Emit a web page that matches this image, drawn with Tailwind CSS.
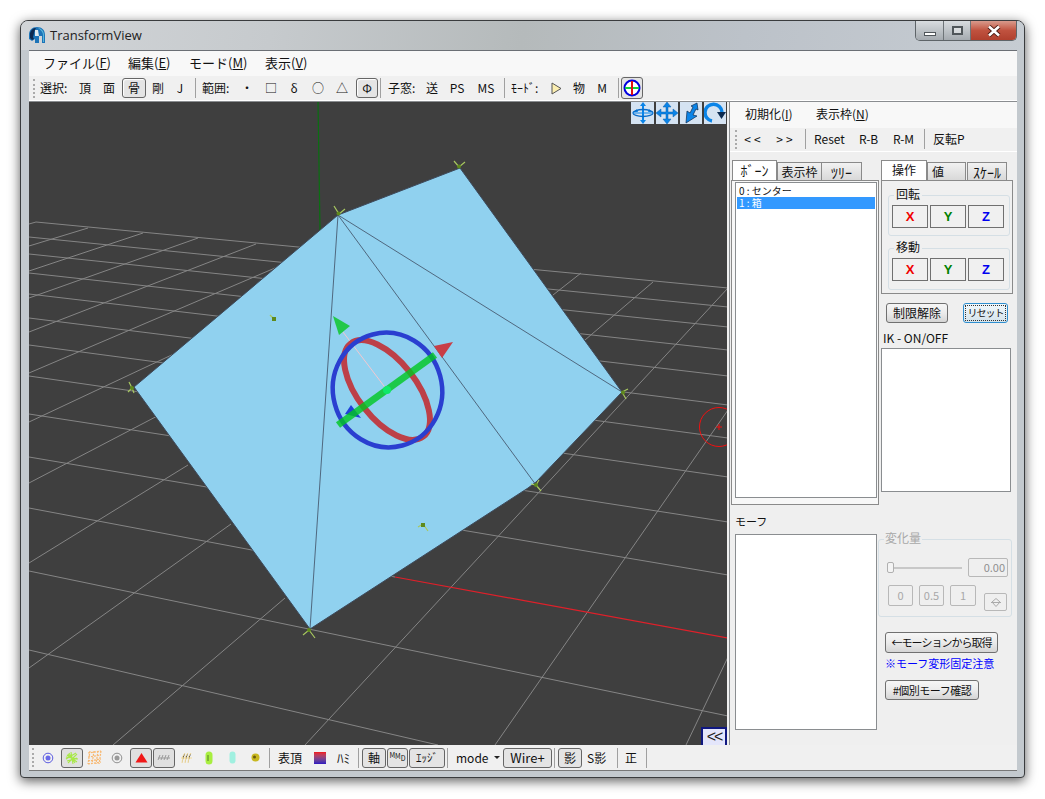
<!DOCTYPE html>
<html lang="ja">
<head>
<meta charset="UTF-8">
<title>TransformView</title>
<script src="https://cdn.jsdelivr.net/npm/@tailwindcss/browser@4"></script>
</head>
<body class="bg-white w-[1045px] h-[799px] overflow-hidden pt-[20px] pl-[20px] font-['Noto_Sans_CJK_JP','Liberation_Sans',sans-serif] text-[12px] leading-none text-[#111]">

<!-- window -->
<div class="w-[1005px] h-[758px] flex flex-col rounded-t-[8px] rounded-b-[4px] border border-[#3a3c3e] bg-[#c3c9ce] shadow-[0_3px_12px_rgba(0,0,0,0.65)]">

  <!-- title bar -->
  <div class="h-[29px] shrink-0 flex items-start rounded-t-[7px] bg-[linear-gradient(100deg,#d2d5d8_0%,#c6cacd_25%,#b5babb_50%,#bcc2c9_72%,#c6ccd2_100%)]">
    <svg class="ml-[8px] mt-[6px]" width="16" height="16" viewBox="0 0 16 16">
      <path d="M0 8C0 3 3 0 8 0s8 3 8 8v8h-3V9h-3v7H6v-4l-3 2-3-2z" fill="#1d74b8"/>
      <path d="M1 6c1-3 3-5 6-5-2 3-2 6-3 9l1 2-2 1-2-2z" fill="#0e2a50"/>
      <path d="M9 1c3 0 6 3 6 7v7h-1V8c0-3-2-5-5-7z" fill="#58b8dc"/>
      <path d="M6 3h3l1 6H6z" fill="#dfe8ee"/>
    </svg>
    <span class="ml-[5px] mt-[6px] font-['Open_Sans'] text-[13px] leading-[16px] text-[#222]">TransformView</span>
    <!-- caption buttons -->
    <div class="ml-auto mr-[7px] flex h-[20px] border border-t-0 border-[#5e6468] rounded-b-[5px] overflow-hidden">
      <div class="w-[28px] flex items-end justify-center pb-[4px] bg-linear-to-b from-[#d8dcdf] to-[#a5abb0] border-r border-[#6e7478]">
        <div class="w-[12px] h-[4px] bg-white border border-[#50565a]"></div>
      </div>
      <div class="w-[27px] flex items-center justify-center bg-linear-to-b from-[#d8dcdf] to-[#a5abb0] border-r border-[#6e7478]">
        <div class="w-[11px] h-[9px] border-2 border-[#50565a] bg-white/40"></div>
      </div>
      <div class="w-[45px] flex items-center justify-center bg-linear-to-b from-[#d89a8c] via-[#c0523f] to-[#b0402e]">
        <svg width="14" height="12" viewBox="0 0 14 12"><path d="M2 1.500l10 9M12 1.500l-10 9" stroke="#4a1c14" stroke-width="4.400"/><path d="M2 1.500l10 9M12 1.500l-10 9" stroke="#fff" stroke-width="2.600"/></svg>
      </div>
    </div>
  </div>

  <!-- client area -->
  <div class="mx-[8px] w-[988px] h-[721px] shrink-0 flex flex-col border-t border-[#6b6f75] bg-[#f0f0f0]">

    <!-- menu -->
    <div class="h-[25px] shrink-0 flex items-center pb-[2px] text-[13px] bg-[#f8f8f8]">
      <span class="ml-[14px] w-[85px]">ファイル(<u>F</u>)</span>
      <span class="w-[61px]">編集(<u>E</u>)</span>
      <span class="w-[76px]">モード(<u>M</u>)</span>
      <span>表示(<u>V</u>)</span>
    </div>

    <!-- main toolbar -->
    <div class="h-[25px] shrink-0 flex items-center bg-[#f0f0f0] border-b border-white text-[12px]">
      <div class="ml-[4px] w-[3px] h-[19px] border-l-2 border-dotted border-[#aaa]"></div>
      <span class="ml-[4px] w-[33px]">選択:</span>
      <span class="w-[24px] text-center">頂</span>
      <span class="w-[24px] text-center">面</span>
      <span class="ml-[1px] w-[24px] h-[20px] flex items-center justify-center rounded-[3px] border border-[#666] bg-[#e4e4e4] shadow-[inset_1px_1px_1px_#fff]">骨</span>
      <span class="w-[24px] text-center">剛</span>
      <span class="w-[20px] text-center">J</span>
      <div class="ml-[5px] w-[1px] h-[20px] bg-[#a0a0a0]"></div>
      <span class="ml-[6px] w-[30px]">範囲:</span>
      <span class="ml-[3px] w-[24px] text-center">・</span>
      <span class="w-[24px] text-center">□</span>
      <span class="w-[22px] text-center">δ</span>
      <span class="ml-[1px] w-[24px] text-center">○</span>
      <span class="w-[24px] text-center">△</span>
      <span class="ml-[2px] w-[22px] h-[20px] flex items-center justify-center rounded-[3px] border border-[#666] bg-[#e4e4e4] shadow-[inset_1px_1px_1px_#fff]">Φ</span>
      <div class="ml-[2px] w-[1px] h-[20px] bg-[#a0a0a0]"></div>
      <span class="ml-[7px] w-[30px]">子窓:</span>
      <span class="ml-[2px] w-[24px] text-center">送</span>
      <span class="ml-[1px] w-[24px] text-center">PS</span>
      <span class="ml-[1px] w-[32px] text-center">MS</span>
      <div class="ml-[2px] w-[1px] h-[20px] bg-[#a0a0a0]"></div>
      <span class="ml-[6px] w-[29px] whitespace-nowrap">ﾓｰﾄﾞ:</span>
      <span class="ml-[4px] w-[24px] flex justify-center">
        <svg width="11" height="13" viewBox="0 0 11 13"><path d="M1 1l9 5.500-9 5.500z" fill="#fbeeb0" stroke="#555"/></svg>
      </span>
      <span class="w-[22px] text-center">物</span>
      <span class="w-[24px] text-center">M</span>
      <div class="ml-[4px] w-[1px] h-[20px] bg-[#a0a0a0]"></div>
      <span class="ml-[2px] w-[22px] h-[22px] flex items-center justify-center rounded-[3px] border border-[#666] bg-[#e4e4e4]">
        <svg width="18" height="18" viewBox="0 0 18 18"><circle cx="9" cy="9" r="7.500" fill="#fff" stroke="#0000e0" stroke-width="2"/><path d="M2 9h14" stroke="#10d040" stroke-width="2"/><path d="M9 2v14" stroke="#e01010" stroke-width="2"/></svg>
      </span>
    </div>

    <!-- workspace -->
    <div class="h-[644px] shrink-0 flex border-t border-[#8a8d90]">

      <!-- 3D view -->
      <div class="relative w-[698px] h-[643px] shrink-0 bg-[#3f3f3f] overflow-hidden">
        <svg class="block" width="698" height="643" viewBox="29 102 698 643">
          <g stroke="#858585" stroke-width="1" fill="none">
            <path d="M29 224L36 222L728 288"/>
            <path d="M29 237L728 307"/>
            <path d="M29 254L728 327"/>
            <path d="M29 273L728 350"/>
            <path d="M29 294L728 376"/>
            <path d="M29 318L728 405"/>
            <path d="M29 345L728 438"/>
            <path d="M29 376L728 477"/>
            <path d="M29 414L728 522"/>
            <path d="M29 457L728 575"/>
            <path d="M29 508L395 577"/>
            <path d="M29 571L728 716"/>
            <path d="M29 650L438 745"/>
            <path d="M29 246L88 228"/>
            <path d="M29 271L143 233"/>
            <path d="M29 298L198 238"/>
            <path d="M29 332L256 244"/>
            <path d="M29 373L275 268"/>
            <path d="M29 422L178 352"/>
            <path d="M29 483L165 412"/>
            <path d="M29 563L188 465"/>
            <path d="M29 668L231 524"/>
            <path d="M113 745L285 598"/>
            <path d="M305 745L728 288"/>
            <path d="M495 745L728 410"/>
            <path d="M686 745L728 657"/>
            <path d="M553 295L581 273"/>
            <path d="M585 340L653 282"/>
          </g>
          <path d="M395 577L728 638" stroke="#e0202a" stroke-width="1.200"/>
          <path d="M318 102L320 230" stroke="#0b6e12" stroke-width="1.200"/>
          <path d="M134 387L338 215L460 168L622 392L536 482L528 488L310 629Z" fill="#90d1ef" stroke="#3d4a5c" stroke-width="1"/>
          <g stroke="#3f4c62" stroke-width="0.800" fill="none">
            <path d="M338 215L622 392"/>
            <path d="M338 215L536 485"/>
            <path d="M338 215L310 629"/>
          </g>
          <!-- vertices -->
          <g stroke="#a8c860" stroke-width="1.200" fill="none">
            <path d="M334 206L339 214L345 209"/>
            <path d="M129 382L132 388L134 393M132 388L128 392"/>
            <path d="M454 161L459 167L465 162"/>
            <path d="M628 389L622 392L626 399"/>
            <path d="M539 480L536 485L531 484M536 485L541 491"/>
            <path d="M303 635L309 630L315 638"/>
            <path d="M270 315L274 319"/>
            <path d="M418 527L423 524L428 531"/>
          </g>
          <g fill="#5f8a1c">
            <circle cx="338.500" cy="213.500" r="2"/><circle cx="132" cy="388" r="2"/><circle cx="459" cy="166.500" r="2"/><circle cx="623" cy="392.500" r="2"/><circle cx="536" cy="485" r="2"/><circle cx="309" cy="630" r="2"/>
            <rect x="272" y="317" width="4" height="4"/><rect x="421" y="523" width="4" height="4"/>
          </g>
          <!-- gizmo -->
          <path d="M343 332L387 390" stroke="#f2c8d0" stroke-width="1"/>
          <ellipse cx="387" cy="390" rx="59" ry="29" transform="rotate(52 387 390)" fill="none" stroke="#bd4048" stroke-width="6"/>
          <path d="M351 405L345 414L361 418Z" fill="#2040d8"/>
          <ellipse cx="387.500" cy="390" rx="54.500" ry="57.500" transform="rotate(-15 387.500 390)" fill="none" stroke="#2a3fd0" stroke-width="4.500"/>
          <path d="M338 425L435 355" stroke="#00c820" stroke-width="7" opacity="0.800"/>
          <circle cx="387" cy="390" r="4" fill="#10e868"/>
          <path d="M453 342L434 346L442 358Z" fill="#c83e46"/>
          <path d="M333 316L339 335L350 326Z" fill="#22c84a"/>
          <circle cx="719" cy="427" r="19.500" fill="none" stroke="#f01010" stroke-width="1"/>
          <path d="M716 427h6M719 424v6" stroke="#f01010"/>
        </svg>

        <!-- view buttons -->
        <div class="absolute top-0 left-[602px] flex gap-[2px]">
          <div class="w-[23px] h-[22px] bg-[#d5e3f2] flex items-center justify-center">
            <svg width="22" height="22" viewBox="0 0 22 22"><g fill="#0a84e8"><path d="M11 0l3 4h-2v14h2l-3 4-3-4h2V4H8z"/><path d="M5 7l1 3H2zM17 7l3 3h-4z"/></g><ellipse cx="11" cy="11" rx="10" ry="3.500" fill="none" stroke="#0a6cc8" stroke-width="1.300"/><path d="M1 11h20" stroke="#0a84e8" stroke-width="1"/></svg>
          </div>
          <div class="w-[22px] h-[22px] bg-[#d5e3f2] flex items-center justify-center">
            <svg width="22" height="22" viewBox="0 0 22 22"><path d="M11 0l4 5h-3v5h5V7l5 4-5 4v-3h-5v5h3l-4 5-4-5h3v-5H5v3l-5-4 5-4v3h5V5H7z" fill="#0a84e8" stroke="#0a5ca8" stroke-width="0.500"/></svg>
          </div>
          <div class="w-[22px] h-[22px] bg-[#d5e3f2] flex items-center justify-center">
            <svg width="22" height="22" viewBox="0 0 22 22"><path d="M17 1l1 7-2-1-3 6 4 1-11 7 1-12 3 2 3-6-2-1z" fill="#0a84e8" stroke="#0a2a50" stroke-width="0.700"/></svg>
          </div>
          <div class="w-[22px] h-[22px] bg-[#d5e3f2] flex items-center justify-center">
            <svg width="22" height="22" viewBox="0 0 22 22"><path d="M8 19A8.500 8.500 0 1 1 18 10" fill="none" stroke="#0a84e8" stroke-width="3.500"/><path d="M13 10h9l-4.500 7z" fill="#0a2a50"/></svg>
          </div>
        </div>

        <!-- panel toggle -->
        <div class="absolute right-0 bottom-0 w-[26px] h-[18px] flex items-center justify-center bg-[#e4e6fb] border-2 border-b-0 border-[#101880] font-['Liberation_Sans'] font-light text-[16px] leading-[14px] tracking-[-2px] text-[#222]">&lt;&lt;</div>
      </div>

      <div class="w-[2px] shrink-0 bg-[#f0f0f0]"></div>

      <!-- right panel -->
      <div class="w-[288px] shrink-0 flex flex-col border-l border-[#8a8d90] bg-[#efefef]">
        <div class="h-[26px] shrink-0 flex items-center pb-[2px] bg-[#f8f8f8] text-[12px]">
          <span class="ml-[15px] w-[71px]">初期化(<u>I</u>)</span>
          <span>表示枠(<u>N</u>)</span>
        </div>
        <div class="h-[24px] shrink-0 flex items-center pb-[1px] bg-[#f0f0f0] border-b border-white">
          <div class="ml-[5px] w-[3px] h-[19px] border-l-2 border-dotted border-[#aaa]"></div>
          <span class="w-[32px] text-center tracking-[3px]">&lt;&lt;</span>
          <span class="w-[32px] text-center tracking-[3px]">&gt;&gt;</span>
          <div class="ml-[3px] w-[1px] h-[20px] bg-[#a0a0a0]"></div>
          <span class="ml-[8px] w-[45px]">Reset</span>
          <span class="w-[34px]">R-B</span>
          <span class="w-[31px]">R-M</span>
          <div class="w-[1px] h-[20px] bg-[#a0a0a0]"></div>
          <span class="ml-[8px]">反転P</span>
        </div>

        <div class="flex pl-[1px] pt-[8px]">
          <!-- left column -->
          <div class="w-[150px] shrink-0">
            <div class="flex items-end h-[20px] pl-[1px]">
              <span class="w-[45px] h-[20px] pb-[2px] flex items-center justify-center bg-white border border-b-0 border-[#8a8a8a] text-[14px]">ﾎﾞｰﾝ</span>
              <span class="w-[45px] h-[18px] flex items-center justify-center bg-linear-to-b from-[#f2f2f2] to-[#d8d8d8] border border-b-0 border-[#8a8a8a] text-[12px]">表示枠</span>
              <span class="w-[40px] h-[18px] flex items-center justify-center bg-linear-to-b from-[#f2f2f2] to-[#d8d8d8] border border-b-0 border-l-0 border-[#8a8a8a] text-[14px]">ﾂﾘｰ</span>
            </div>
            <div class="w-[148px] h-[325px] bg-[#f7f7f7] border border-[#8a8a8a] pl-[3px] pt-[1px]">
              <div class="w-[142px] h-[316px] bg-white border border-[#8a8d90] p-[1px] text-[10px]">
                <div class="h-[13px] leading-[13px] pl-[2px]">0 : センター</div>
                <div class="h-[12px] leading-[12px] pl-[2px] bg-[#3399ff] text-white">1 : 箱</div>
              </div>
            </div>
            <div class="ml-[4px] mt-[11px] h-[14px] text-[11px] leading-[11px]">モーフ</div>
            <div class="ml-[4px] mt-[4px] w-[142px] h-[196px] bg-white border border-[#8a8d90]"></div>
          </div>

          <!-- right column -->
          <div class="w-[133px] shrink-0">
            <div class="flex items-end h-[20px]">
              <span class="w-[46px] h-[20px] pb-[1px] flex items-center justify-center bg-white border border-b-0 border-[#8a8a8a] text-[12px]">操作</span>
              <span class="w-[39px] h-[18px] pl-[4px] flex items-center bg-linear-to-b from-[#f2f2f2] to-[#d8d8d8] border border-b-0 border-[#8a8a8a]">値</span>
              <span class="ml-[1px] w-[40px] h-[18px] flex items-center justify-center bg-linear-to-b from-[#f2f2f2] to-[#d8d8d8] border border-b-0 border-[#8a8a8a] text-[14px]">ｽｹｰﾙ</span>
            </div>
            <div class="w-[132px] h-[114px] bg-[#f0f0f0] border border-[#8a8a8a] pl-[6px] pt-[7px]">
              <fieldset class="w-[122px] h-[48px] border border-[#d5dfe5] rounded-[3px] pl-[3px]">
                <legend class="ml-[2px] px-[2px] h-[14px] leading-[11px]">回転</legend>
                <div class="mt-[3px] flex gap-[2px] font-['Liberation_Sans'] font-bold text-[13px]">
                  <span class="w-[36px] h-[23px] flex items-center justify-center border border-[#707070] text-[#f00000]">X</span>
                  <span class="w-[36px] h-[23px] flex items-center justify-center border border-[#707070] text-[#008000]">Y</span>
                  <span class="w-[36px] h-[23px] flex items-center justify-center border border-[#707070] text-[#0000f0]">Z</span>
                </div>
              </fieldset>
              <fieldset class="mt-[5px] w-[122px] h-[49px] border border-[#d5dfe5] rounded-[3px] pl-[3px]">
                <legend class="ml-[2px] px-[2px] h-[14px] leading-[11px]">移動</legend>
                <div class="mt-[3px] flex gap-[2px] font-['Liberation_Sans'] font-bold text-[13px]">
                  <span class="w-[36px] h-[23px] flex items-center justify-center border border-[#707070] text-[#f00000]">X</span>
                  <span class="w-[36px] h-[23px] flex items-center justify-center border border-[#707070] text-[#008000]">Y</span>
                  <span class="w-[36px] h-[23px] flex items-center justify-center border border-[#707070] text-[#0000f0]">Z</span>
                </div>
              </fieldset>
            </div>
            <div class="mt-[9px] flex">
              <span class="ml-[5px] w-[62px] h-[20px] flex items-center justify-center rounded-[3px] border border-[#707070] bg-linear-to-b from-[#f6f6f6] via-[#ebebeb] to-[#d5d5d5]">制限解除</span>
              <span class="ml-[15px] w-[45px] h-[20px] p-[1px] rounded-[3px] border border-[#2f8fd0] bg-linear-to-b from-[#f0f8fc] to-[#d5e4ec]">
                <span class="w-full h-full flex items-center justify-center border border-dotted border-[#333] text-[10px] tracking-[-1px] whitespace-nowrap">リセット</span>
              </span>
            </div>
            <div class="mt-[9px] ml-[2px] h-[14px] leading-[11px]">IK - ON/OFF</div>
            <div class="mt-[2px] w-[130px] h-[144px] bg-white border border-[#8a8d90]"></div>

            <fieldset class="mt-[40px] -ml-[3px] w-[134px] h-[85px] border border-[#d5dfe5] rounded-[3px] text-[#a8a8a8]">
              <legend class="ml-[5px] px-[1px] h-[14px] leading-[11px]">変化量</legend>
              <div class="mt-[12px] flex items-center h-[19px]">
                <div class="relative ml-[8px] w-[75px] h-[2px] bg-[#c8c8c8]">
                  <div class="absolute left-0 -top-[5px] w-[7px] h-[11px] rounded-[2px] border border-[#b0b0b0] bg-[#f4f4f4]"></div>
                </div>
                <div class="ml-[6px] w-[40px] h-[19px] pr-[2px] flex items-center justify-end border border-[#b8b8b8] rounded-[2px] text-[11px] text-[#909090]">0.00</div>
              </div>
              <div class="mt-[8px] flex items-start pl-[9px] text-[11px]">
                <span class="w-[25px] h-[21px] flex items-center justify-center border border-[#b8b8b8] rounded-[2px]">0</span>
                <span class="ml-[6px] w-[25px] h-[21px] flex items-center justify-center border border-[#b8b8b8] rounded-[2px]">0.5</span>
                <span class="ml-[6px] w-[26px] h-[21px] flex items-center justify-center border border-[#b8b8b8] rounded-[2px]">1</span>
                <span class="ml-[8px] mt-[8px] w-[23px] h-[18px] flex items-center justify-center border border-[#b8b8b8] rounded-[2px]">
                  <svg width="10" height="9" viewBox="0 0 10 9"><path d="M5 .5L9 4 5 8.500 1 4z" fill="none" stroke="#aaa"/><path d="M0 4.500h10" stroke="#aaa"/></svg>
                </span>
              </div>
            </fieldset>
            <div class="mt-[15px] ml-[4px] w-[113px] h-[21px] flex items-center justify-center rounded-[3px] border border-[#707070] bg-linear-to-b from-[#f6f6f6] via-[#ebebeb] to-[#d5d5d5] text-[11px] tracking-[-1px] whitespace-nowrap">←モーションから取得</div>
            <div class="mt-[3px] ml-[4px] h-[14px] text-[11px] leading-[14px] text-[#0000ff] whitespace-nowrap">※モーフ変形固定注意</div>
            <div class="mt-[10px] ml-[4px] w-[94px] h-[20px] flex items-center justify-center rounded-[3px] border border-[#707070] bg-linear-to-b from-[#f6f6f6] via-[#ebebeb] to-[#d5d5d5] text-[11px] tracking-[-0.5px] whitespace-nowrap">#個別モーフ確認</div>
          </div>
        </div>
      </div>
    </div>

    <!-- bottom toolbar -->
    <div class="h-[26px] shrink-0 flex items-center bg-[#f0f0f0] border-b border-[#777]">
      <div class="ml-[3px] w-[3px] h-[19px] border-l-2 border-dotted border-[#aaa]"></div>
      <span class="ml-[2px] w-[22px] flex justify-center"><svg width="12" height="12" viewBox="0 0 12 12"><circle cx="6" cy="6" r="4.800" fill="none" stroke="#5a5ae0"/><circle cx="6" cy="6" r="2.500" fill="#6a6ae8"/></svg></span>
      <span class="ml-[2px] w-[22px] h-[20px] flex items-center justify-center rounded-[3px] border border-[#666] bg-[#e0e0e0]"><svg width="14" height="14" viewBox="0 0 14 14"><path d="M2 4l10 7M1 8l10-6M3 12l9-9M6 1l2 12M1 6l12 2M4 2l6 10M2 10l10-3M3 3l7 9" stroke="#a8e848" stroke-width="1.100"/></svg></span>
      <span class="w-[22px] flex justify-center"><svg width="15" height="15" viewBox="0 0 15 15"><path d="M1 3l13-2M1 7l13-2M1 11l13-2M1 14l13-2M3 1l-2 13M7 1l-2 13M11 1l-2 13M14 1l-2 13" stroke="#f8b870" stroke-width="1.200" stroke-dasharray="2 1"/></svg></span>
      <span class="ml-[1px] w-[22px] flex justify-center"><svg width="12" height="12" viewBox="0 0 12 12"><circle cx="6" cy="6" r="4.800" fill="none" stroke="#909090"/><circle cx="6" cy="6" r="2.500" fill="#9a9a9a"/></svg></span>
      <span class="ml-[2px] w-[22px] h-[20px] flex items-center justify-center rounded-[3px] border border-[#666] bg-[#e0e0e0]"><svg width="13" height="11" viewBox="0 0 13 11"><path d="M6.500 1L12.500 10.500H.5z" fill="#f01818"/></svg></span>
      <span class="ml-[1px] w-[22px] h-[20px] flex items-center justify-center rounded-[3px] border border-[#666] bg-[#e0e0e0]"><svg width="14" height="7" viewBox="0 0 14 7"><path d="M1 6l2-5M4 6l2-5M7 6l2-5M10 6l2-5M1 4h12" stroke="#9a9a9a" stroke-width="1"/></svg></span>
      <span class="w-[22px] flex justify-center"><svg width="13" height="12" viewBox="0 0 13 12"><path d="M2 11l1-7 2-3M5 11l1-7 2-3M8 11l1-7 2-3M1 6h11" stroke="#f5dc98" stroke-width="1"/></svg></span>
      <span class="ml-[1px] w-[22px] flex justify-center"><svg width="8" height="14" viewBox="0 0 8 14"><rect x="0.500" y="0.500" width="7" height="13" rx="3.500" fill="#a8ee40"/><path d="M3 4v6" stroke="#70a030" stroke-width="1.500"/></svg></span>
      <span class="ml-[1px] w-[22px] flex justify-center"><svg width="7" height="13" viewBox="0 0 7 13"><rect x="0.500" y="0.500" width="6" height="12" rx="3" fill="#a0f0e0"/></svg></span>
      <span class="ml-[1px] w-[22px] flex justify-center"><svg width="9" height="9" viewBox="0 0 9 9"><circle cx="4.500" cy="4.500" r="4" fill="#c8b820"/><circle cx="3.500" cy="4" r="1.500" fill="#6a5a10"/></svg></span>
      <div class="ml-[3px] w-[1px] h-[20px] bg-[#a0a0a0]"></div>
      <span class="ml-[8px] w-[24px] whitespace-nowrap">表頂</span>
      <div class="ml-[12px] w-[12px] h-[12px] bg-linear-to-b from-[#f01010] to-[#3010c0]"></div>
      <span class="ml-[11px] w-[13px] text-[13px] whitespace-nowrap">ﾊﾐ</span>
      <div class="ml-[8px] w-[1px] h-[20px] bg-[#a0a0a0]"></div>
      <span class="ml-[3px] w-[24px] h-[20px] flex items-center justify-center rounded-[3px] border border-[#666] bg-[#e4e4e4]">軸</span>
      <span class="ml-[1px] w-[21px] h-[20px] flex items-center justify-center rounded-[3px] border border-[#666] bg-[#e4e4e4] text-[7px] whitespace-nowrap"><span class="-mt-[5px]">M</span><span class="-mt-[3px]">M</span><span class="mt-[2px]">D</span></span>
      <span class="ml-[1px] w-[36px] h-[20px] flex items-center justify-center rounded-[3px] border border-[#666] bg-[#e4e4e4] text-[11px] whitespace-nowrap">ｴｯｼﾞ</span>
      <div class="ml-[2px] w-[1px] h-[20px] bg-[#a0a0a0]"></div>
      <span class="ml-[8px] w-[31px]">mode</span>
      <div class="ml-[7px] w-0 h-0 border-x-[3px] border-t-[3px] border-x-transparent border-t-[#222]"></div>
      <span class="ml-[3px] w-[49px] h-[20px] flex items-center justify-center rounded-[3px] border border-[#666] bg-[#e4e4e4] text-[13px]">Wire+</span>
      <div class="ml-[2px] w-[1px] h-[20px] bg-[#a0a0a0]"></div>
      <span class="ml-[3px] w-[24px] h-[20px] flex items-center justify-center rounded-[3px] border border-[#666] bg-[#e4e4e4]">影</span>
      <span class="ml-[5px] w-[20px] whitespace-nowrap">S影</span>
      <div class="ml-[10px] w-[1px] h-[20px] bg-[#a0a0a0]"></div>
      <span class="ml-[7px] w-[12px]">正</span>
      <div class="ml-[9px] w-[1px] h-[20px] bg-[#a0a0a0]"></div>
    </div>
  </div>
</div>
</body>
</html>
